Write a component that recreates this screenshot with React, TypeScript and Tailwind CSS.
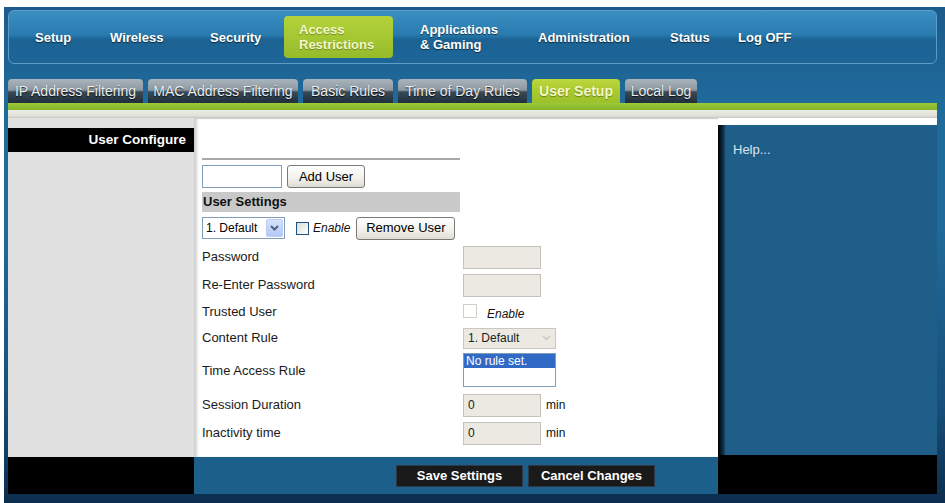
import React from "react";

const F = { fontFamily: '"Liberation Sans", Arial, sans-serif' };

function NavItem({ w, children }: { w: number; children: React.ReactNode }) {
  return (
    <div
      className="flex items-center text-[13px] font-bold text-white leading-[15px] [text-shadow:0_1px_1px_rgba(0,0,0,0.6)]"
      style={{ width: w }}
    >
      {children}
    </div>
  );
}

function Tab({ w, active, children }: { w: number; active?: boolean; children: React.ReactNode }) {
  return (
    <div
      className={
        active
          ? "h-[24px] rounded-t-[4px] flex items-center justify-center text-[14px] font-bold text-[#f4f7c6] bg-[linear-gradient(180deg,#bcd83e_0%,#a8ca2e_50%,#9cc12a_100%)] [text-shadow:0_1px_1px_rgba(0,0,0,0.35)]"
          : "h-[24px] rounded-t-[4px] flex items-center justify-center text-[14px] text-[#e9edf0] bg-[linear-gradient(180deg,#a9b4bb_0%,#8d99a2_46%,#3a4955_54%,#1f2f3c_100%)] [text-shadow:0_1px_1px_rgba(0,0,0,0.8)]"
      }
      style={{ width: w }}
    >
      {children}
    </div>
  );
}

function XpButton({ w, children }: { w: number; children: React.ReactNode }) {
  return (
    <div
      className="h-[23px] rounded-[3px] border border-[#7a7a7a] bg-[linear-gradient(180deg,#ffffff_0%,#f1f0ea_60%,#dedcd2_100%)] flex items-center justify-center text-[13px] text-black"
      style={{ width: w }}
    >
      {children}
    </div>
  );
}

function DisabledInput({ value }: { value?: string }) {
  return (
    <div className="w-[78px] h-[23px] border border-[#c4c3bb] bg-[#ebe9e1] text-[12px] text-[#222] flex items-center pl-[4px]">
      {value}
    </div>
  );
}

function Row({ h, label, children }: { h: number; label: string; children: React.ReactNode }) {
  return (
    <div className="flex items-center" style={{ height: h }}>
      <div className="w-[261px] text-[13px] text-[#1a1a1a]">{label}</div>
      <div className="flex items-center">{children}</div>
    </div>
  );
}

export default function App() {
  return (
    <div className="w-[945px] h-[503px] bg-white overflow-hidden" style={F}>
      <div className="ml-[4px] mt-[7px] w-[941px] h-[496px] flex flex-col bg-[linear-gradient(180deg,#1a5b8b_0%,#1f6b9c_20%,#1f6a9b_45%,#174f7a_80%,#0c2d4d_100%)]">
        {/* top nav */}
        <div className="mt-[3px] ml-[4px] w-[929px] h-[54px] rounded-[6px] border border-[#5e9cc6] bg-[linear-gradient(180deg,#3a8ec0_0%,#2a7cb0_45%,#1c6394_55%,#1d6697_100%)] flex items-center pl-[26px]">
          <NavItem w={75}>Setup</NavItem>
          <NavItem w={100}>Wireless</NavItem>
          <NavItem w={74}>Security</NavItem>
          <div className="w-[109px] h-[42px] rounded-[4px] bg-[linear-gradient(180deg,#b4d33a_0%,#a3c632_55%,#95bb2b_100%)] flex flex-col justify-center pl-[15px] text-[13px] font-bold leading-[15px] text-[#f4f7c8] [text-shadow:0_1px_1px_rgba(0,0,0,0.3)]">
            <span>Access</span>
            <span>Restrictions</span>
          </div>
          <div className="w-[27px]" />
          <NavItem w={118}>
            <span className="flex flex-col">
              <span>Applications</span>
              <span>&amp; Gaming</span>
            </span>
          </NavItem>
          <NavItem w={132}>Administration</NavItem>
          <NavItem w={68}>Status</NavItem>
          <NavItem w={80}>Log OFF</NavItem>
        </div>

        {/* sub tabs */}
        <div className="mt-[15px] ml-[4px] flex gap-[5px] items-end">
          <Tab w={135}>IP Address Filtering</Tab>
          <Tab w={150}>MAC Address Filtering</Tab>
          <Tab w={90}>Basic Rules</Tab>
          <Tab w={129}>Time of Day Rules</Tab>
          <Tab w={88} active>
            User Setup
          </Tab>
          <Tab w={72}>Local Log</Tab>
        </div>
        <div className="ml-[4px] w-[929px] h-[7px] bg-[linear-gradient(180deg,#9cc83a,#86b52a)]" />
        <div className="ml-[4px] w-[929px] h-[8px] bg-[linear-gradient(180deg,#ebebe3_0%,#e2e2da_70%,#c9c9c4_100%)]" />

        {/* body */}
        <div className="ml-[4px] w-[929px] h-[339px] flex">
          <div className="w-[186px] bg-[#e1e1e1] pt-[10px]">
            <div className="h-[24px] bg-black text-white font-bold text-[13.5px] flex items-center justify-end pr-[8px]">
              User Configure
            </div>
          </div>
          <div className="w-[524px] bg-white border-t border-l border-[#cfcfcf] shadow-[inset_3px_0_3px_-1px_rgba(0,0,0,0.18)] pl-[7px] pt-[39px]">
            <div className="w-[258px] h-[2px] bg-[#a9a9a9]" />
            <div className="mt-[5px] flex items-center gap-[5px]">
              <div className="w-[80px] h-[23px] border border-[#7f9db9] bg-white" />
              <XpButton w={78}>Add User</XpButton>
            </div>
            <div className="mt-[4px] w-[258px] h-[20px] bg-[#c9c9c9] flex items-center pl-[1px] text-[13px] font-bold text-[#111]">
              User Settings
            </div>
            <div className="mt-[4px] h-[24px] flex items-center">
              <div className="w-[83px] h-[22px] border border-[#7f9db9] bg-white flex items-center justify-between pl-[3px] pr-[1px] text-[12px] text-black">
                <span>1. Default</span>
                <div className="w-[17px] h-[18px] rounded-[2px] border border-[#b9cdf5] bg-[linear-gradient(180deg,#d6e3fd,#b3c8f6)] flex items-center justify-center">
                  <svg width="9" height="6" viewBox="0 0 9 6">
                    <path d="M1 1 L4.5 4.5 L8 1" stroke="#4d6185" strokeWidth="2" fill="none" />
                  </svg>
                </div>
              </div>
              <div className="ml-[11px] w-[13px] h-[13px] border border-[#1c5180] bg-[linear-gradient(135deg,#dcdcd7,#ffffff)]" />
              <span className="ml-[4px] text-[12px] italic text-[#111]">Enable</span>
              <div className="ml-[6px]">
                <XpButton w={99}>Remove User</XpButton>
              </div>
            </div>
            <div className="mt-[3px]">
              <Row h={28} label="Password">
                <DisabledInput />
              </Row>
              <Row h={28} label="Re-Enter Password">
                <DisabledInput />
              </Row>
              <Row h={26} label="Trusted User">
                <div className="w-[14px] h-[14px] border border-[#cfcfc8] bg-white -mt-[3px]" />
                <span className="ml-[10px] mt-[4px] text-[12px] italic text-[#111]">Enable</span>
              </Row>
              <Row h={26} label="Content Rule">
                <div className="w-[93px] h-[21px] border border-[#c9c8c0] bg-[#ebe9e1] flex items-center justify-between pl-[4px] pr-[4px] text-[12px] text-[#222]">
                  <span>1. Default</span>
                  <svg width="9" height="6" viewBox="0 0 9 6">
                    <path d="M1 1 L4.5 4.5 L8 1" stroke="#c8c8c8" strokeWidth="1.5" fill="none" />
                  </svg>
                </div>
              </Row>
              <Row h={40} label="Time Access Rule">
                <div className="w-[93px] h-[34px] border border-[#7f9db9] bg-white -mt-[2px]">
                  <div className="h-[14px] bg-[#316ac5] text-white text-[12px] leading-[14px] pl-[2px]">No rule set.</div>
                </div>
              </Row>
              <Row h={28} label="Session Duration">
                <DisabledInput value="0" />
                <span className="ml-[5px] text-[12px] text-[#111]">min</span>
              </Row>
              <Row h={28} label="Inactivity time">
                <DisabledInput value="0" />
                <span className="ml-[5px] text-[12px] text-[#111]">min</span>
              </Row>
            </div>
          </div>
          <div className="w-[219px] flex flex-col">
            <div className="h-[7px] bg-white" />
            <div className="flex-1 bg-[linear-gradient(90deg,#000000_0px,#0d2c44_5px,#1e5e89_8px,#1e5e89_100%)] pl-[15px] pt-[15px] text-[13px] text-[#dbe6ef]">
              Help...
            </div>
            <div className="h-[2px] bg-black" />
          </div>
        </div>

        {/* footer */}
        <div className="ml-[4px] w-[929px] h-[37px] flex">
          <div className="w-[186px] bg-black" />
          <div className="w-[524px] bg-[#1d5f8b] flex items-center pl-[202px] gap-[5px]">
            <div className="w-[127px] h-[22px] bg-[#1a1a1a] border border-[#2b3a46] flex items-center justify-center text-white font-bold text-[13px]">
              Save Settings
            </div>
            <div className="w-[127px] h-[22px] bg-[#1a1a1a] border border-[#2b3a46] flex items-center justify-center text-white font-bold text-[13px]">
              Cancel Changes
            </div>
          </div>
          <div className="w-[219px] bg-black" />
        </div>
      </div>
    </div>
  );
}
